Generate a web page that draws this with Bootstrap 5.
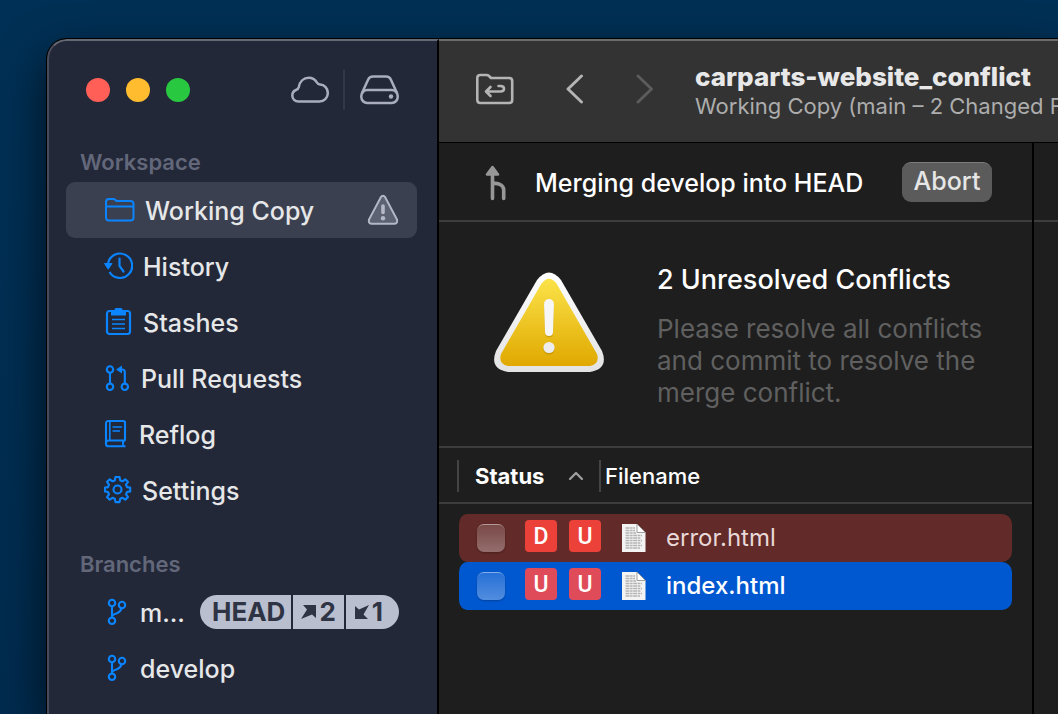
<!DOCTYPE html>
<html lang="en" data-bs-theme="dark">
<head>
<meta charset="utf-8">
<meta name="viewport" content="width=device-width, initial-scale=1">
<title>carparts-website_conflict</title>
<link href="https://cdn.jsdelivr.net/npm/bootstrap@5.3.0/dist/css/bootstrap.min.css" rel="stylesheet">
<style>
  body { font-family: Inter, "Liberation Sans", sans-serif; font-size: 25px; line-height: 32px; background: linear-gradient(#003055, #002b4e); overflow: hidden; }
  .desktop { padding: 38px 0 0 46px; }
  .app-window { background: #1e1e1e; border: solid #000; border-width: 1px 0 0 1px; border-top-left-radius: 21px; box-shadow: 0 18px 46px rgba(0,0,0,.65); overflow: hidden; }
  .sidebar { flex: 0 0 392px; background: #232838; border-right: 2px solid #000; border-left: 2px solid #484c5a; border-top: 2px solid #656973; border-top-left-radius: 20px; color: #e6e7e9; }
  .content-area { border-top: 2px solid #6c6c6c; }
  .side-head { height: 101px; padding: 0 38px 3px 37px; }
  .light { width: 24px; height: 24px; border: 0; padding: 0; border-radius: 50%; }
  .light-close { background: #ff5f57; } .light-min { background: #febc2e; } .light-zoom { background: #28c840; }
  .vline { width: 2px; height: 40px; background: #323747; }
  .side-head .vline { margin: 0 15px 0 14px; }
  .icon-btn { background: none; border: 0; padding: 0; color: #a9adbd; display: flex; }
  .side-label { font-size: 22px; line-height: 40px; font-weight: 600; color: #62677a; padding-left: 31px; margin: 0; }
  .side-label.later { padding-top: 26px; }
  .side-link { display: flex; align-items: center; gap: 10px; height: 56px; margin: 0 20px 0 17px; padding: 2px 18px 0 38px; border-radius: 9px; color: #e6e7e9; text-decoration: none; font-weight: 500; }
  .side-link.active { background: #3b4050; }
  .side-link > svg, .side-link > .pill { margin-bottom: 2px; }
  .side-link > svg:first-child { color: #0a84ff; flex: none; }
  .side-link > .warn { color: #b4b8c6; }
  .pill { display: flex; height: 34px; border-radius: 17px; overflow: hidden; color: #2f3445; font-size: 26px; font-weight: 700; gap: 2px; line-height: 34px; }
  .pill span { background: #b9bfcf; display: flex; align-items: center; gap: 2px; }
  .pill .head-tag { padding: 0 6px 0 12px; }
  .toolbar { height: 102px; background: #333; border-bottom: 1px solid #000; padding: 0 0 5px 37px; white-space: nowrap; overflow: hidden; }
  .toolbar .icon-btn { color: #b4b4b4; }
  .toolbar .icon-btn:disabled { color: #5c5c5c; }
  .toolbar .vline { background: #424242; }
  .doc-name { padding: 4px 0 0 17px; }
  .doc-title { font-size: 26px; line-height: 30px; font-weight: 800; color: #e8e8e8; margin: 0; }
  .doc-sub { font-size: 22px; line-height: 28px; color: #adadad; margin: 0; }
  .merge-row { height: 79px; border-bottom: 2px solid #3d3d3d; }
  .merge-bar { padding: 2px 40px 0 46px; color: #fff; font-weight: 500; }
  .abort-btn { background: #5b5b5b; color: #e6e6e6; border: 0; border-top: 1px solid #7c7c7c; border-radius: 9px; width: 90px; height: 40px; font-size: 25px; line-height: 32px; padding: 0 0 3px; margin-bottom: 2px; font-weight: 500; }
  .abort-btn:hover { background: #666; color: #fff; }
  .conflict { height: 226px; padding: 42px 30px 0 53px; border-bottom: 2px solid #3d3d3d; gap: 51px; }
  .conflict h2 { font-size: 27px; line-height: 32px; font-weight: 500; color: #fff; margin: 0 0 17px; }
  .conflict p { font-size: 26px; color: #606060; margin: 0; }
  .detail-pane { flex: 0 0 26px; border-left: 2px solid #000; }
  .file-list { padding: 0 20px 0 17px; background: linear-gradient(#3d3d3d, #3d3d3d) 0 54px / 100% 2px no-repeat; }
  .file-list table { width: 100%; table-layout: fixed; border-collapse: collapse; }
  .file-list th { padding: 12px 0 22px; font-size: 22px; font-weight: 500; color: #fff; }
  .file-list th div { height: 32px; border-left: 2px solid #444; }
  .file-list td { height: 48px; padding: 0; font-size: 24px; }
  .col-status { width: 142px; }
  .row-error { --row: #622a28; --tag: #eb4138; color: #e8d8d8; }
  .row-selected { --row: #0058d0; --tag: #df4b58; color: #fff; }
  .row-selected label { font-weight: 500; }
  .file-list td:first-child { background: linear-gradient(var(--row), var(--row)) padding-box; border-radius: 10px 0 0 10px; border-left: 2px solid transparent; }
  .file-list td:last-child { background: var(--row); border-radius: 0 10px 10px 0; }
  .file-list label { padding-left: 22px; gap: 20px; }
  .file-list .form-check-input { width: 28px; height: 28px; margin: 0 20px 0 19px; border-radius: 7px; border: 0; border-top: 1px solid rgba(255,255,255,.3); background: linear-gradient(rgba(255,255,255,.15), rgba(255,255,255,.32)); box-shadow: 0 1px 2px rgba(0,0,0,.25); flex: none; }
  .state { width: 32px; height: 32px; line-height: 34px; border-radius: 4px; background: var(--tag); color: #fff; font-family: Roboto, sans-serif; font-weight: 500; font-size: 23px; text-align: center; margin: 0 12px 4px 0; flex: none; }
</style>
</head>
<body>
<div class="desktop d-flex vh-100">
<div class="app-window d-flex flex-grow-1">
  <nav class="sidebar" aria-label="Repository">
    <div class="side-head d-flex align-items-center">
      <div class="d-flex gap-3">
        <button class="light light-close" aria-label="Close"></button>
        <button class="light light-min" aria-label="Minimize"></button>
        <button class="light light-zoom" aria-label="Zoom"></button>
      </div>
      <button class="icon-btn ms-auto" aria-label="Services">
        <svg width="38" height="28" viewBox="0 0 38 28" fill="none" stroke="currentColor" stroke-width="2.500"><path d="M7.500 25.500C4 25.500 1.300 23 1.300 19.500Q1.300 15.500 5 14Q7.300 13.200 7.800 11C8.800 5.500 12.500 1.800 17.800 1.800Q23 1.800 25.500 6Q26.800 8.400 29 8.500C33.500 8.700 36.800 12.500 36.800 17C36.800 22 33 25.500 28.500 25.500Z" stroke-linejoin="round"/></svg>
      </button>
      <span class="vline"></span>
      <button class="icon-btn" aria-label="Repositories">
        <svg width="39" height="30" viewBox="0 0 39 30" fill="none" stroke="currentColor" stroke-width="2.500"><rect x="1.300" y="15" width="36.400" height="13" rx="6"/><path d="M2 18L8.200 4.500Q9.500 1.500 13 1.500H26Q29.500 1.500 30.800 4.500L37 18"/><circle cx="31" cy="21.500" r="2.200" fill="currentColor" stroke="none"/></svg>
      </button>
    </div>

    <h2 class="side-label">Workspace</h2>
    <a class="side-link active" href="#">
      <svg width="31" height="26" viewBox="0 0 31 26" fill="none" stroke="currentColor" stroke-width="2"><path d="M2 5Q2 2 5 2H9Q10.500 2 11.500 3L12.500 4H26.500Q29.500 4 29.500 7V20.500Q29.500 23.500 26.500 23.500H5Q2 23.500 2 20.500ZM2 9.500H29.500"/></svg>
      Working Copy
      <svg class="warn ms-auto" width="32" height="32" viewBox="0 0 32 32"><path d="M13.800 3.200Q16 .2 18.200 3.200L30 25.500Q31 29.500 27.500 29.800H4.500Q1 29.500 2 25.500Z" fill="#5d6272" stroke="currentColor" stroke-width="2"/><path d="M16 12V18.500" stroke="currentColor" stroke-width="3.600" stroke-linecap="round"/><circle cx="16" cy="24.200" r="2.200" fill="currentColor"/></svg>
    </a>
    <a class="side-link" href="#">
      <svg width="29" height="28" viewBox="0 0 29 28" fill="none" stroke="currentColor" stroke-width="2.200"><path d="M4 11.500A12.200 12.200 0 1 1 5.500 20"/><path d="M15.500 6.500V14L19.500 19.500" stroke-linecap="round"/><path d="M.5 11.500H8L4.200 17.200Z" fill="currentColor" stroke-width="1"/></svg>
      History
    </a>
    <a class="side-link" href="#">
      <svg width="29" height="30" viewBox="0 0 29 30" fill="none" stroke="currentColor" stroke-width="2.200"><rect x="3" y="4" width="23" height="23" rx="2.500"/><path d="M7 3H10.500Q10.500 1 12 1H17Q18.500 1 18.500 3H22V8.500H7Z" fill="currentColor" stroke="none"/><path d="M8 12.500H21M8 17H21M8 21.500H21" stroke-width="1.700"/></svg>
      Stashes
    </a>
    <a class="side-link" href="#">
      <svg width="27" height="28" viewBox="0 0 27 28" fill="none" stroke="currentColor" stroke-width="2.100"><circle cx="6" cy="5.500" r="3.200"/><circle cx="6" cy="22.800" r="3.200"/><circle cx="20.800" cy="22.800" r="3.200"/><path d="M6 8.700V19.600M20.800 19.600V8Q20.800 5.500 18 5.500H17"/><path d="M12 5.500L18 1.500V9.500Z" fill="currentColor" stroke="none"/></svg>
      Pull Requests
    </a>
    <a class="side-link" href="#">
      <svg width="25" height="30" viewBox="0 0 25 30" fill="none" stroke="currentColor" stroke-width="2.100"><path d="M21 21.500V3.500Q21 2 19.500 2H4.500Q2 2 2 4.500V25Q2 27.300 4.500 27.300H21.500M2 24Q2 21.500 5 21.500H21.500M19.500 21.500Q18.300 24.500 19.500 27.300"/><path d="M5.800 2V21.500M8.500 8H18M8.500 12H16" stroke-width="1.600"/></svg>
      Reflog
    </a>
    <a class="side-link" href="#">
      <svg width="28" height="28" viewBox="0 0 28 28" fill="none" stroke="currentColor" stroke-width="2.100" stroke-linejoin="round"><circle cx="13.500" cy="13.500" r="4"/><path d="M11.500 1H15.500L16.200 4.400L18.500 5.300L21.300 3.300L24 6L22 8.700L23 11.100L26.200 11.600V15.400L23 16L22 18.300L24 21L21.300 23.700L18.500 21.800L16.200 22.700L15.500 26.100H11.500L10.800 22.700L8.500 21.800L5.700 23.700L3 21L5 18.300L4 16L.9 15.400V11.600L4 11.100L5 8.700L3 6L5.700 3.300L8.500 5.300L10.800 4.400Z"/></svg>
      Settings
    </a>

    <h2 class="side-label later">Branches</h2>
    <a class="side-link" href="#">
      <svg width="26" height="28" viewBox="0 0 26 28" fill="none" stroke="currentColor" stroke-width="2.100"><circle cx="8" cy="5" r="3.200"/><circle cx="18" cy="7" r="3.200"/><circle cx="8" cy="22.800" r="3.200"/><path d="M8 8.200V19.600M17.500 10.200Q17 13.500 13.500 15Q8.500 16.500 8 18.500"/></svg>
      <span>m...</span>
      <span class="pill ms-auto"><span class="head-tag">HEAD</span><span class="ps-2 pe-2"><svg width="16" height="16" viewBox="0 0 16 16" fill="currentColor"><path d="M2 1H15V14L11 10.500L0 15L6 5.500Z"/></svg>2</span><span class="ps-2 pe-3"><svg width="16" height="16" viewBox="0 0 16 16" fill="currentColor"><path d="M14 15H1V2L5 5.500L15 1L9.500 10.500Z"/></svg>1</span></span>
    </a>
    <a class="side-link" href="#">
      <svg width="26" height="28" viewBox="0 0 26 28" fill="none" stroke="currentColor" stroke-width="2.100"><circle cx="8" cy="5" r="3.200"/><circle cx="18" cy="7" r="3.200"/><circle cx="8" cy="22.800" r="3.200"/><path d="M8 8.200V19.600M17.500 10.200Q17 13.500 13.500 15Q8.500 16.500 8 18.500"/></svg>
      develop
    </a>
  </nav>

  <main class="content-area d-flex flex-column flex-fill overflow-hidden">
    <header class="toolbar d-flex align-items-center">
      <button class="icon-btn" aria-label="Open in Finder">
        <svg width="38" height="32" viewBox="0 0 38 32" fill="none" stroke="currentColor" stroke-width="2.600" stroke-linecap="round" stroke-linejoin="round"><path d="M1.300 5Q1.300 2 4.300 2H10.500Q12 2 13 3L15 5H33.200Q36.200 5 36.200 8V27Q36.200 30 33.200 30H4.300Q1.300 30 1.300 27Z"/><path d="M14.500 14L10 18.500L14.500 23M10.500 18.500H24.500Q28 18.500 28 15.800Q28 13 24.500 13H22.500"/></svg>
      </button>
      <button class="icon-btn ms-5 ps-1" aria-label="Back">
        <svg width="18" height="30" viewBox="0 0 18 30" fill="none" stroke="currentColor" stroke-width="2.900" stroke-linecap="round" stroke-linejoin="round"><path d="M15.500 2L2 15L15.500 28"/></svg>
      </button>
      <span class="vline mx-4"></span>
      <button class="icon-btn ms-1" aria-label="Forward" disabled>
        <svg width="18" height="30" viewBox="0 0 18 30" fill="none" stroke="currentColor" stroke-width="2.900" stroke-linecap="round" stroke-linejoin="round"><path d="M2 2L15.500 15L2 28"/></svg>
      </button>
      <div class="doc-name ms-4">
        <h1 class="doc-title">carparts-website_conflict</h1>
        <p class="doc-sub">Working Copy (main – 2 Changed Files)</p>
      </div>
    </header>

    <div class="d-flex flex-fill">
      <section class="flex-fill">
        <div class="merge-row merge-bar d-flex align-items-center">
          <svg width="22" height="36" viewBox="0 0 22 36" fill="none" stroke="#979797" stroke-width="3.600" stroke-linecap="round"><path d="M7.500 8V33.500M7.500 18.500C12 18 18.700 19 18.700 25V33.500"/><path d="M7.500 2L13 9.500H2Z" fill="#979797" stroke-width="2.600" stroke-linejoin="round"/></svg>
          <span class="ms-4 ps-1">Merging develop into HEAD</span>
          <button class="btn abort-btn ms-auto">Abort</button>
        </div>
        <div class="conflict d-flex align-items-start">
          <svg class="mt-2 flex-shrink-0" width="114" height="102" viewBox="0 0 114 102">
            <defs>
              <linearGradient id="yel" x1="0" y1="0" x2="0" y2="1"><stop offset="0" stop-color="#fbe349"/><stop offset="1" stop-color="#e0a800"/></linearGradient>
              <linearGradient id="wht" x1="0" y1="0" x2="0" y2="1"><stop offset="0" stop-color="#fff"/><stop offset="1" stop-color="#e2e2e2"/></linearGradient>
            </defs>
            <path d="M45 8Q57-7 69 8L110 79Q117 97 98 100H16Q-3 97 4 79Z" fill="url(#wht)"/>
            <path d="M49.500 11.500Q57 2 64.500 11.500L105 82Q108 92 98 94H16Q6 92 9 82Z" fill="url(#yel)"/>
            <path d="M52 32A5 5 0 0 1 62 32L61 60A4 4 0 0 1 53 60Z" fill="#b88900" opacity=".5" transform="translate(0 1.500)"/>
            <path d="M52 32A5 5 0 0 1 62 32L61 60A4 4 0 0 1 53 60Z" fill="#f6f6f6"/>
            <circle cx="57" cy="77" r="5.600" fill="#b88900" opacity=".6"/><circle cx="57" cy="75.500" r="5.600" fill="#ececec"/>
          </svg>
          <div>
            <h2>2 Unresolved Conflicts</h2>
            <p>Please resolve all conflicts<br>and commit to resolve the<br>merge conflict.</p>
          </div>
        </div>
        <div class="file-list">
          <table>
            <thead>
              <tr>
                <th class="col-status" scope="col" aria-sort="ascending"><div class="d-flex align-items-center ps-3 fw-bold">Status <svg class="ms-4" width="16" height="10" viewBox="0 0 16 10" fill="none" stroke="#a0a0a0" stroke-width="2.200" stroke-linecap="round" stroke-linejoin="round"><path d="M2 8L8 2L14 8"/></svg></div></th>
                <th scope="col"><div class="d-flex align-items-center ps-1">Filename</div></th>
              </tr>
            </thead>
            <tbody>
              <tr class="row-error">
                <td><div class="d-flex align-items-center"><input class="form-check-input" type="checkbox" id="f1"><span class="state">D</span><span class="state me-0">U</span></div></td>
                <td><label class="d-flex align-items-center" for="f1"><svg width="25" height="30" viewBox="0 0 25 30"><use href="#doc"/></svg><span>error.html</span></label></td>
              </tr>
              <tr class="row-selected">
                <td><div class="d-flex align-items-center"><input class="form-check-input" type="checkbox" id="f2"><span class="state">U</span><span class="state me-0">U</span></div></td>
                <td><label class="d-flex align-items-center" for="f2"><svg width="25" height="30" viewBox="0 0 25 30"><use href="#doc"/></svg><span>index.html</span></label></td>
              </tr>
            </tbody>
          </table>
        </div>
      </section>
      <aside class="detail-pane" aria-label="Details"><div class="merge-row"></div></aside>
    </div>
  </main>
</div>
</div>
<svg class="d-none">
  <symbol id="doc" viewBox="0 0 25 30">
    <path d="M1 1H16L24.500 9.500V29H1Z" fill="#f3f3f3"/>
    <path d="M16 1L24.500 9.500H16Z" fill="#fff" stroke="#888" stroke-width=".8"/>
    <path d="M4.500 5H14M4.500 7.500H14M4.500 10H15M4.500 12.500H21M4.500 15H20M4.500 17.500H21M4.500 20H20M4.500 22.500H21M4.500 25H19" stroke="#b4b4b4" stroke-width="1.300" stroke-dasharray="4 .6 2.500 .6"/>
  </symbol>
</svg>
<script src="https://cdn.jsdelivr.net/npm/bootstrap@5.3.0/dist/js/bootstrap.bundle.min.js"></script>
</body>
</html>
